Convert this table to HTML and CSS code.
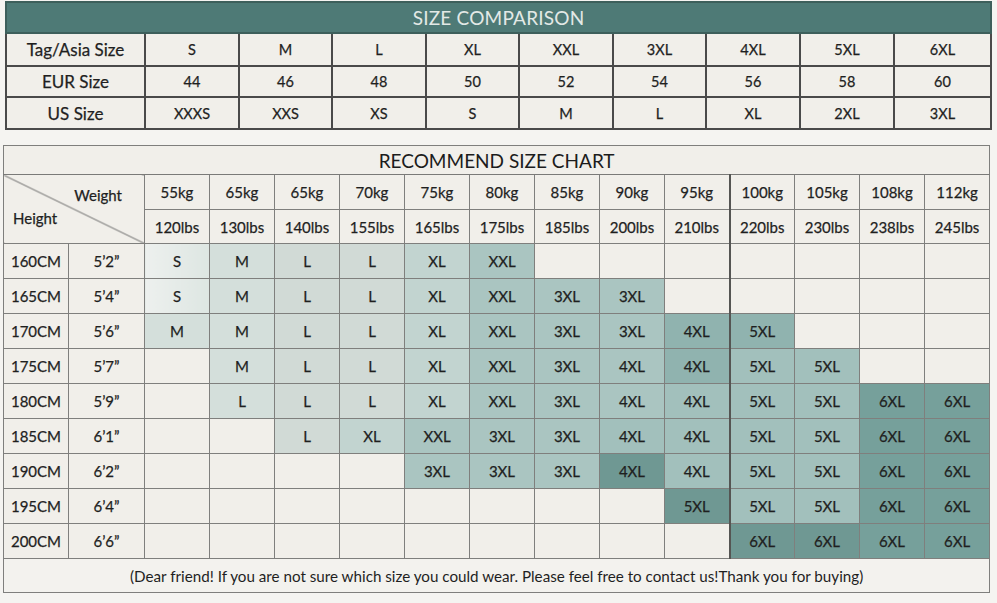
FILE: index.html
```html
<!DOCTYPE html>
<html lang="en">
<head>
<meta charset="utf-8">
<title>Size Comparison</title>
<link rel="stylesheet" href="styles.css">
</head>
<body>
<main class="page">
  <table class="compare">
    <colgroup>
      <col class="c-label"><col class="c-94"><col class="c-93"><col class="c-94"><col class="c-93"><col class="c-94"><col class="c-93"><col class="c-94"><col class="c-94"><col class="c-97">
    </colgroup>
    <thead>
      <tr><th colspan="10" class="bar">SIZE COMPARISON</th></tr>
    </thead>
    <tbody>
      <tr class="r1"><th>Tag/Asia Size</th><td>S</td><td>M</td><td>L</td><td>XL</td><td>XXL</td><td>3XL</td><td>4XL</td><td>5XL</td><td>6XL</td></tr>
      <tr class="r2"><th>EUR Size</th><td>44</td><td>46</td><td>48</td><td>50</td><td>52</td><td>54</td><td>56</td><td>58</td><td>60</td></tr>
      <tr class="r3"><th>US Size</th><td>XXXS</td><td>XXS</td><td>XS</td><td>S</td><td>M</td><td>L</td><td>XL</td><td>2XL</td><td>3XL</td></tr>
    </tbody>
  </table>

  <table class="chart">
    <colgroup>
      <col class="k-cm"><col class="k-ft">
      <col class="k-w"><col class="k-w"><col class="k-w"><col class="k-w"><col class="k-w"><col class="k-w"><col class="k-w"><col class="k-w"><col class="k-w"><col class="k-w"><col class="k-w"><col class="k-w"><col class="k-w">
    </colgroup>
    <thead>
      <tr class="title"><th colspan="15">RECOMMEND SIZE CHART</th></tr>
      <tr class="h1">
        <th colspan="2" rowspan="2" class="diag"><div class="diag-in"><span class="lw">Weight</span><span class="lh">Height</span></div></th>
        <th>55kg</th><th>65kg</th><th>65kg</th><th>70kg</th><th>75kg</th><th>80kg</th><th>85kg</th><th>90kg</th><th>95kg</th><th class="bl">100kg</th><th>105kg</th><th>108kg</th><th>112kg</th>
      </tr>
      <tr class="h2">
        <th>120lbs</th><th>130lbs</th><th>140lbs</th><th>155lbs</th><th>165lbs</th><th>175lbs</th><th>185lbs</th><th>200lbs</th><th>210lbs</th><th class="bl">220lbs</th><th>230lbs</th><th>238lbs</th><th>245lbs</th>
      </tr>
    </thead>
    <tbody>
      <tr><th>160CM</th><th>5’2”</th><td class="t1">S</td><td class="t2">M</td><td class="t3">L</td><td class="t3">L</td><td class="t4">XL</td><td class="t5">XXL</td><td></td><td></td><td></td><td class="bl"></td><td></td><td></td><td></td></tr>
      <tr><th>165CM</th><th>5’4”</th><td class="t1">S</td><td class="t2">M</td><td class="t3">L</td><td class="t3">L</td><td class="t4">XL</td><td class="t5">XXL</td><td class="t5">3XL</td><td class="t5">3XL</td><td></td><td class="bl"></td><td></td><td></td><td></td></tr>
      <tr><th>170CM</th><th>5’6”</th><td class="t2">M</td><td class="t2">M</td><td class="t3">L</td><td class="t3">L</td><td class="t4">XL</td><td class="t5">XXL</td><td class="t5">3XL</td><td class="t5">3XL</td><td class="t7">4XL</td><td class="t7 bl">5XL</td><td></td><td></td><td></td></tr>
      <tr><th>175CM</th><th>5’7”</th><td></td><td class="t2">M</td><td class="t3">L</td><td class="t3">L</td><td class="t4">XL</td><td class="t5">XXL</td><td class="t5">3XL</td><td class="t5">4XL</td><td class="t7">4XL</td><td class="t6 bl">5XL</td><td class="t6">5XL</td><td></td><td></td></tr>
      <tr><th>180CM</th><th>5’9”</th><td></td><td class="t2">L</td><td class="t3">L</td><td class="t3">L</td><td class="t4">XL</td><td class="t5">XXL</td><td class="t5">3XL</td><td class="t5">4XL</td><td class="t6">4XL</td><td class="t6 bl">5XL</td><td class="t6">5XL</td><td class="t8">6XL</td><td class="t8">6XL</td></tr>
      <tr><th>185CM</th><th>6’1”</th><td></td><td></td><td class="t3">L</td><td class="t4">XL</td><td class="t5">XXL</td><td class="t5">3XL</td><td class="t5">3XL</td><td class="t6">4XL</td><td class="t6">4XL</td><td class="t6 bl">5XL</td><td class="t6">5XL</td><td class="t8">6XL</td><td class="t8">6XL</td></tr>
      <tr><th>190CM</th><th>6’2”</th><td></td><td></td><td></td><td></td><td class="t5">3XL</td><td class="t5">3XL</td><td class="t5">3XL</td><td class="t9">4XL</td><td class="t6">4XL</td><td class="t6 bl">5XL</td><td class="t6">5XL</td><td class="t8">6XL</td><td class="t8">6XL</td></tr>
      <tr><th>195CM</th><th>6’4”</th><td></td><td></td><td></td><td></td><td></td><td></td><td></td><td></td><td class="t9">5XL</td><td class="t6 bl">5XL</td><td class="t6">5XL</td><td class="t8">6XL</td><td class="t8">6XL</td></tr>
      <tr><th>200CM</th><th>6’6”</th><td></td><td></td><td></td><td></td><td></td><td></td><td></td><td></td><td></td><td class="t9 bl">6XL</td><td class="t9">6XL</td><td class="t8">6XL</td><td class="t8">6XL</td></tr>
    </tbody>
    <tfoot>
      <tr><td colspan="15" class="note">(Dear friend! If you are not sure which size you could wear. Please feel free to contact us!Thank you for buying)</td></tr>
    </tfoot>
  </table>
</main>
</body>
</html>
```

FILE: styles.css
```css
* { box-sizing: border-box; }

html, body {
  margin: 0;
  padding: 0;
  background: #f5f4f1;
}

body {
  font-family: Lato, "Open Sans", sans-serif;
  color: #1f1f1f;
  width: 997px;
  height: 603px;
  overflow: hidden;
}

.page {
  display: flex;
  flex-direction: column;
  padding: 1px 0 0 3px;
}

/* ---------- top comparison table ---------- */
.compare {
  border-collapse: collapse;
  table-layout: fixed;
  width: 986px;
  margin-left: 2px;
  background: #f1efea;
}
.c-label { width: 139px; }
.c-94 { width: 94px; }
.c-93 { width: 93px; }
.c-97 { width: 97px; }

.compare th,
.compare td {
  border: 2px solid #4a4a4a;
  text-align: center;
  padding: 0;
  font-weight: 400;
  -webkit-text-stroke: 0.25px currentColor;
}
.compare .bar {
  background: #4e7a76;
  color: #e3e9e6;
  font-size: 19px;
  height: 31px;
  letter-spacing: 0.2px;
  border-color: #3d5f5b;
  -webkit-text-stroke: 0;
}
.compare tbody th {
  font-size: 17px;
}
.compare tbody td {
  font-size: 14.5px;
}
.compare .r1 { height: 33px; }
.compare .r2 { height: 31px; }
.compare .r3 { height: 32px; }

/* ---------- recommend chart ---------- */
.chart {
  margin-top: 15px;
  border-collapse: collapse;
  table-layout: fixed;
  width: 986px;
  background: #f1efea;
}
.k-cm { width: 65px; }
.k-ft { width: 76px; }
.k-w { width: 65px; }

.chart th,
.chart td {
  border: 1.5px solid #7f7f7d;
  text-align: center;
  padding: 0;
  font-weight: 400;
  font-size: 15px;
  -webkit-text-stroke: 0.25px currentColor;
}
.chart .title th {
  height: 29px;
  font-size: 19px;
  color: #1c1c1c;
  border-bottom-color: #7a7a78;
  -webkit-text-stroke: 0;
}
.chart .h1 { height: 35px; }
.chart .h2 { height: 34px; }
.chart .h1 th,
.chart .h2 th { font-size: 15px; }
.chart tbody tr { height: 35px; }
.chart tbody th { font-size: 15px; }

.chart .bl { border-left: 2px solid #555553; }

.diag {
  background: linear-gradient(to top right, transparent calc(50% - 0.9px), #6a6a6a 50%, transparent calc(50% + 0.9px));
}
.diag-in {
  display: flex;
  flex-direction: column;
  height: 66px;
  padding: 10px 22px 0 9px;
  font-size: 15px;
}
.lw { align-self: flex-end; }
.lh { align-self: flex-start; margin-top: 5px; }

.t1 { background: linear-gradient(to right, #edf0ee, #dde6e2); }
.t2 { background: #d4dfdb; }
.t3 { background: #d1dad6; }
.t4 { background: #c2d4d0; }
.t5 { background: #aac5c1; }
.t6 { background: #a2c0bc; }
.t7 { background: #90b3af; }
.t8 { background: #76a09b; }
.t9 { background: #6f9893; }

.chart .note {
  height: 34px;
  font-size: 15.2px;
  background: #f3f2ee;
  -webkit-text-stroke: 0;
}
```
